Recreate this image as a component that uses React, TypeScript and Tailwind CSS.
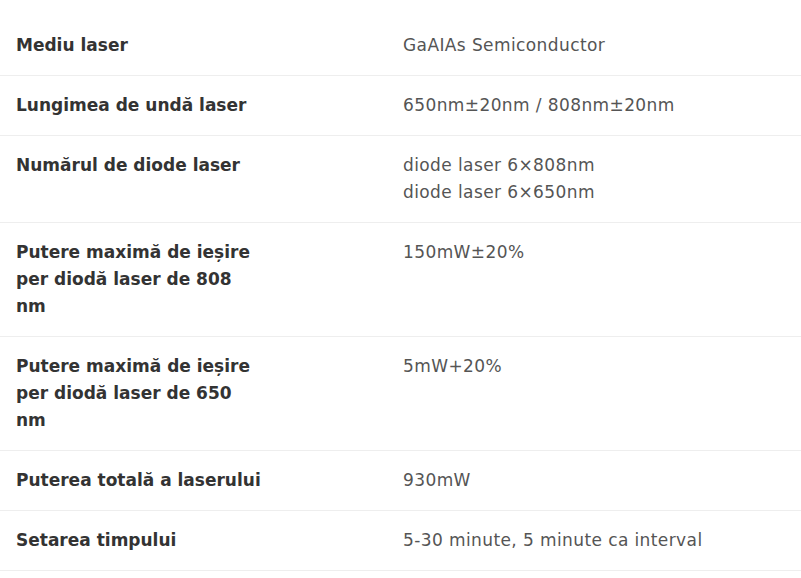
import React from "react";

const rows: { label: string; value: string[] }[] = [
  { label: "Mediu laser", value: ["GaAIAs Semiconductor"] },
  { label: "Lungimea de undă laser", value: ["650nm±20nm / 808nm±20nm"] },
  { label: "Numărul de diode laser", value: ["diode laser 6×808nm", "diode laser 6×650nm"] },
  { label: "Putere maximă de ieșire per diodă laser de 808 nm", value: ["150mW±20%"] },
  { label: "Putere maximă de ieșire per diodă laser de 650 nm", value: ["5mW+20%"] },
  { label: "Puterea totală a laserului", value: ["930mW"] },
  { label: "Setarea timpului", value: ["5-30 minute, 5 minute ca interval"] },
];

export default function App() {
  return (
    <div
      className="min-h-[578px] w-full bg-white pt-4"
      style={{ fontFamily: '"DejaVu Sans", sans-serif' }}
    >
      {rows.map((r, i) => (
        <div key={i} className="grid grid-cols-[387px_1fr] border-b border-[#eeeeee]">
          <div className="px-4 pt-4 pb-4 text-[17px] leading-[27px] font-bold text-[#333333]">
            <div className="w-[245px]">{r.label}</div>
          </div>
          <div className="px-4 pt-4 pb-4 text-[17px] leading-[27px] tracking-[0.4px] text-[#555555]">
            {r.value.map((v, j) => (
              <div key={j}>{v}</div>
            ))}
          </div>
        </div>
      ))}
    </div>
  );
}
